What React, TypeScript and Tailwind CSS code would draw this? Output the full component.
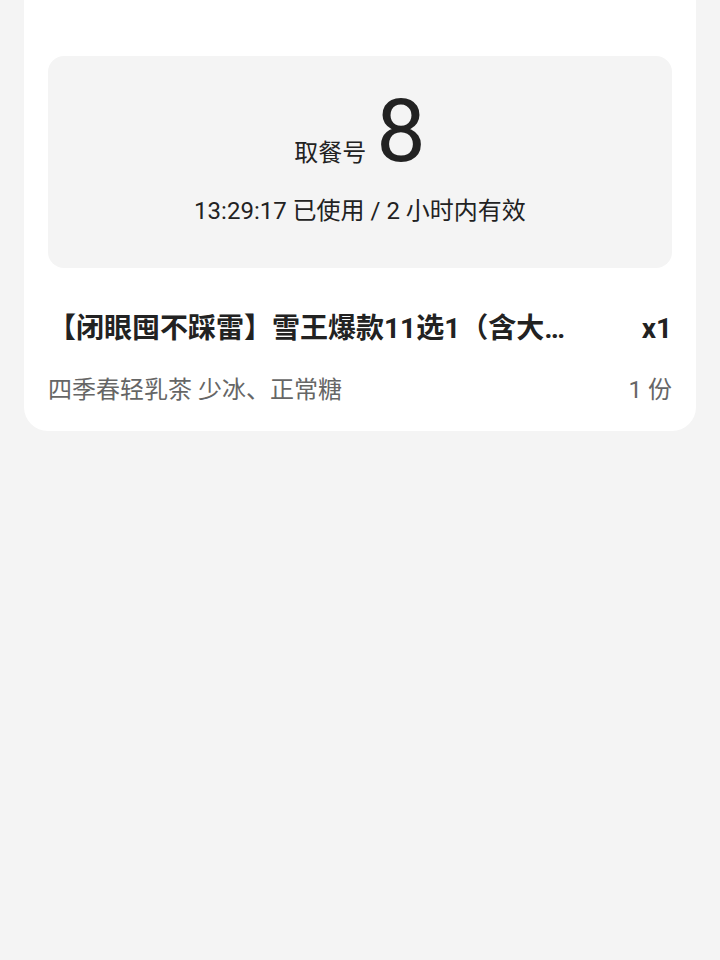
export default function App() {
  return (
    <div
      className="min-h-[960px] bg-[#f4f4f4]"
      style={{ fontFamily: 'Roboto, "Noto Sans CJK SC", sans-serif' }}
    >
      <div className="mx-6 rounded-b-[24px] bg-white px-6 pb-[25px] pt-14">
        <div className="flex flex-col items-center rounded-[16px] bg-[#f4f4f4] pb-[41px] pt-[31px]">
          <div className="flex items-baseline gap-[10px] text-[#222]">
            <span className="text-[24px] leading-none">取餐号</span>
            <span className="text-[88px] leading-none">8</span>
          </div>
          <div className="mt-5 text-[24px] leading-[32px] text-[#222]">
            13:29:17 已使用 / 2 小时内有效
          </div>
        </div>

        <div className="mt-[41px] flex items-center justify-between">
          <div className="w-[540px] truncate text-[28px] font-bold leading-[40px] text-[#222]">
            【闭眼囤不踩雷】雪王爆款11选1（含大杯多肉葡萄）
          </div>
          <div className="shrink-0 text-[28px] font-bold leading-[40px] text-[#222]">x1</div>
        </div>
        <div className="mt-[25px] flex items-center justify-between text-[24px] leading-[32px] text-[#666]">
          <span>四季春轻乳茶 少冰、正常糖</span>
          <span>1 份</span>
        </div>
      </div>
    </div>
  );
}
